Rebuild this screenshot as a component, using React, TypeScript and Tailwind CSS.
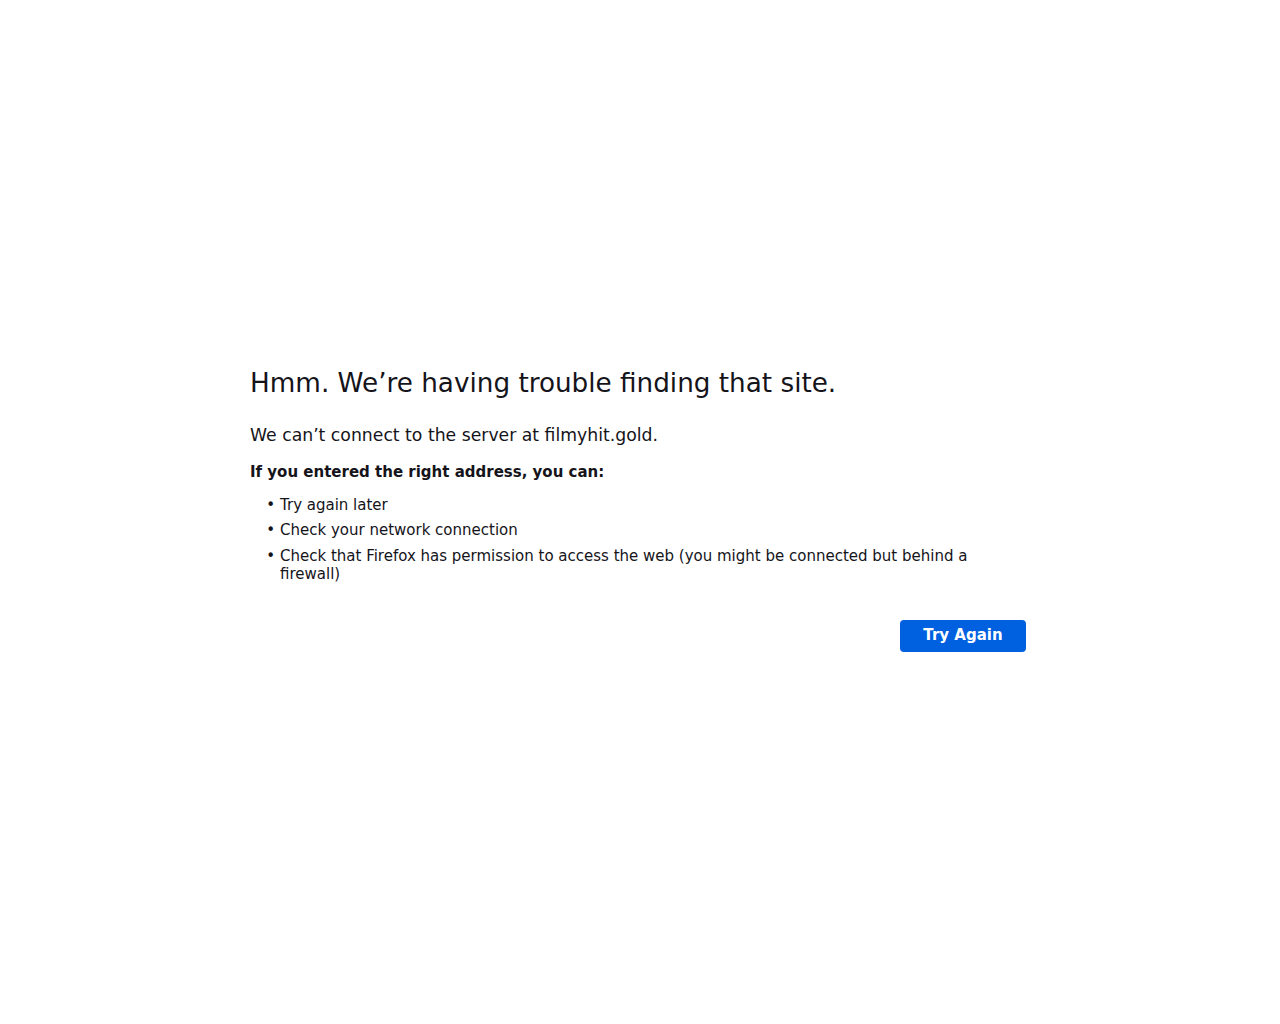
const items = [
  "Try again later",
  "Check your network connection",
  "Check that Firefox has permission to access the web (you might be connected but behind a firewall)",
];

export default function App() {
  return (
    <div
      className="min-h-screen w-full bg-white flex items-center justify-center text-[#15141a]"
      style={{ fontFamily: '"DejaVu Sans", sans-serif' }}
    >
      <div className="w-[780px] flex flex-col pb-[4px]">
        <h1 className="text-[26.25px] leading-[1.2] font-normal m-0">Hmm. We’re having trouble finding that site.</h1>
        <p className="text-[17.25px] leading-[1.2] mt-[25px]">We can’t connect to the server at filmyhit.gold.</p>
        <p className="text-[15px] leading-[1.2] font-bold mt-[17px]">If you entered the right address, you can:</p>
        <ul className="list-none mt-[15px] text-[15px] leading-[1.2] pr-[50px] flex flex-col gap-[7.5px]">
          {items.map((t) => (
            <li key={t} className="flex">
              <span className="w-[30px] shrink-0 flex justify-end pr-[5px]">•</span>
              <span>{t}</span>
            </li>
          ))}
        </ul>
        <div className="flex justify-end mt-[37px]">
          <button className="mr-[4px] h-[32px] w-[126px] rounded-[4px] bg-[#0061e0] text-white font-bold text-[15px]">
            Try Again
          </button>
        </div>
      </div>
    </div>
  );
}
